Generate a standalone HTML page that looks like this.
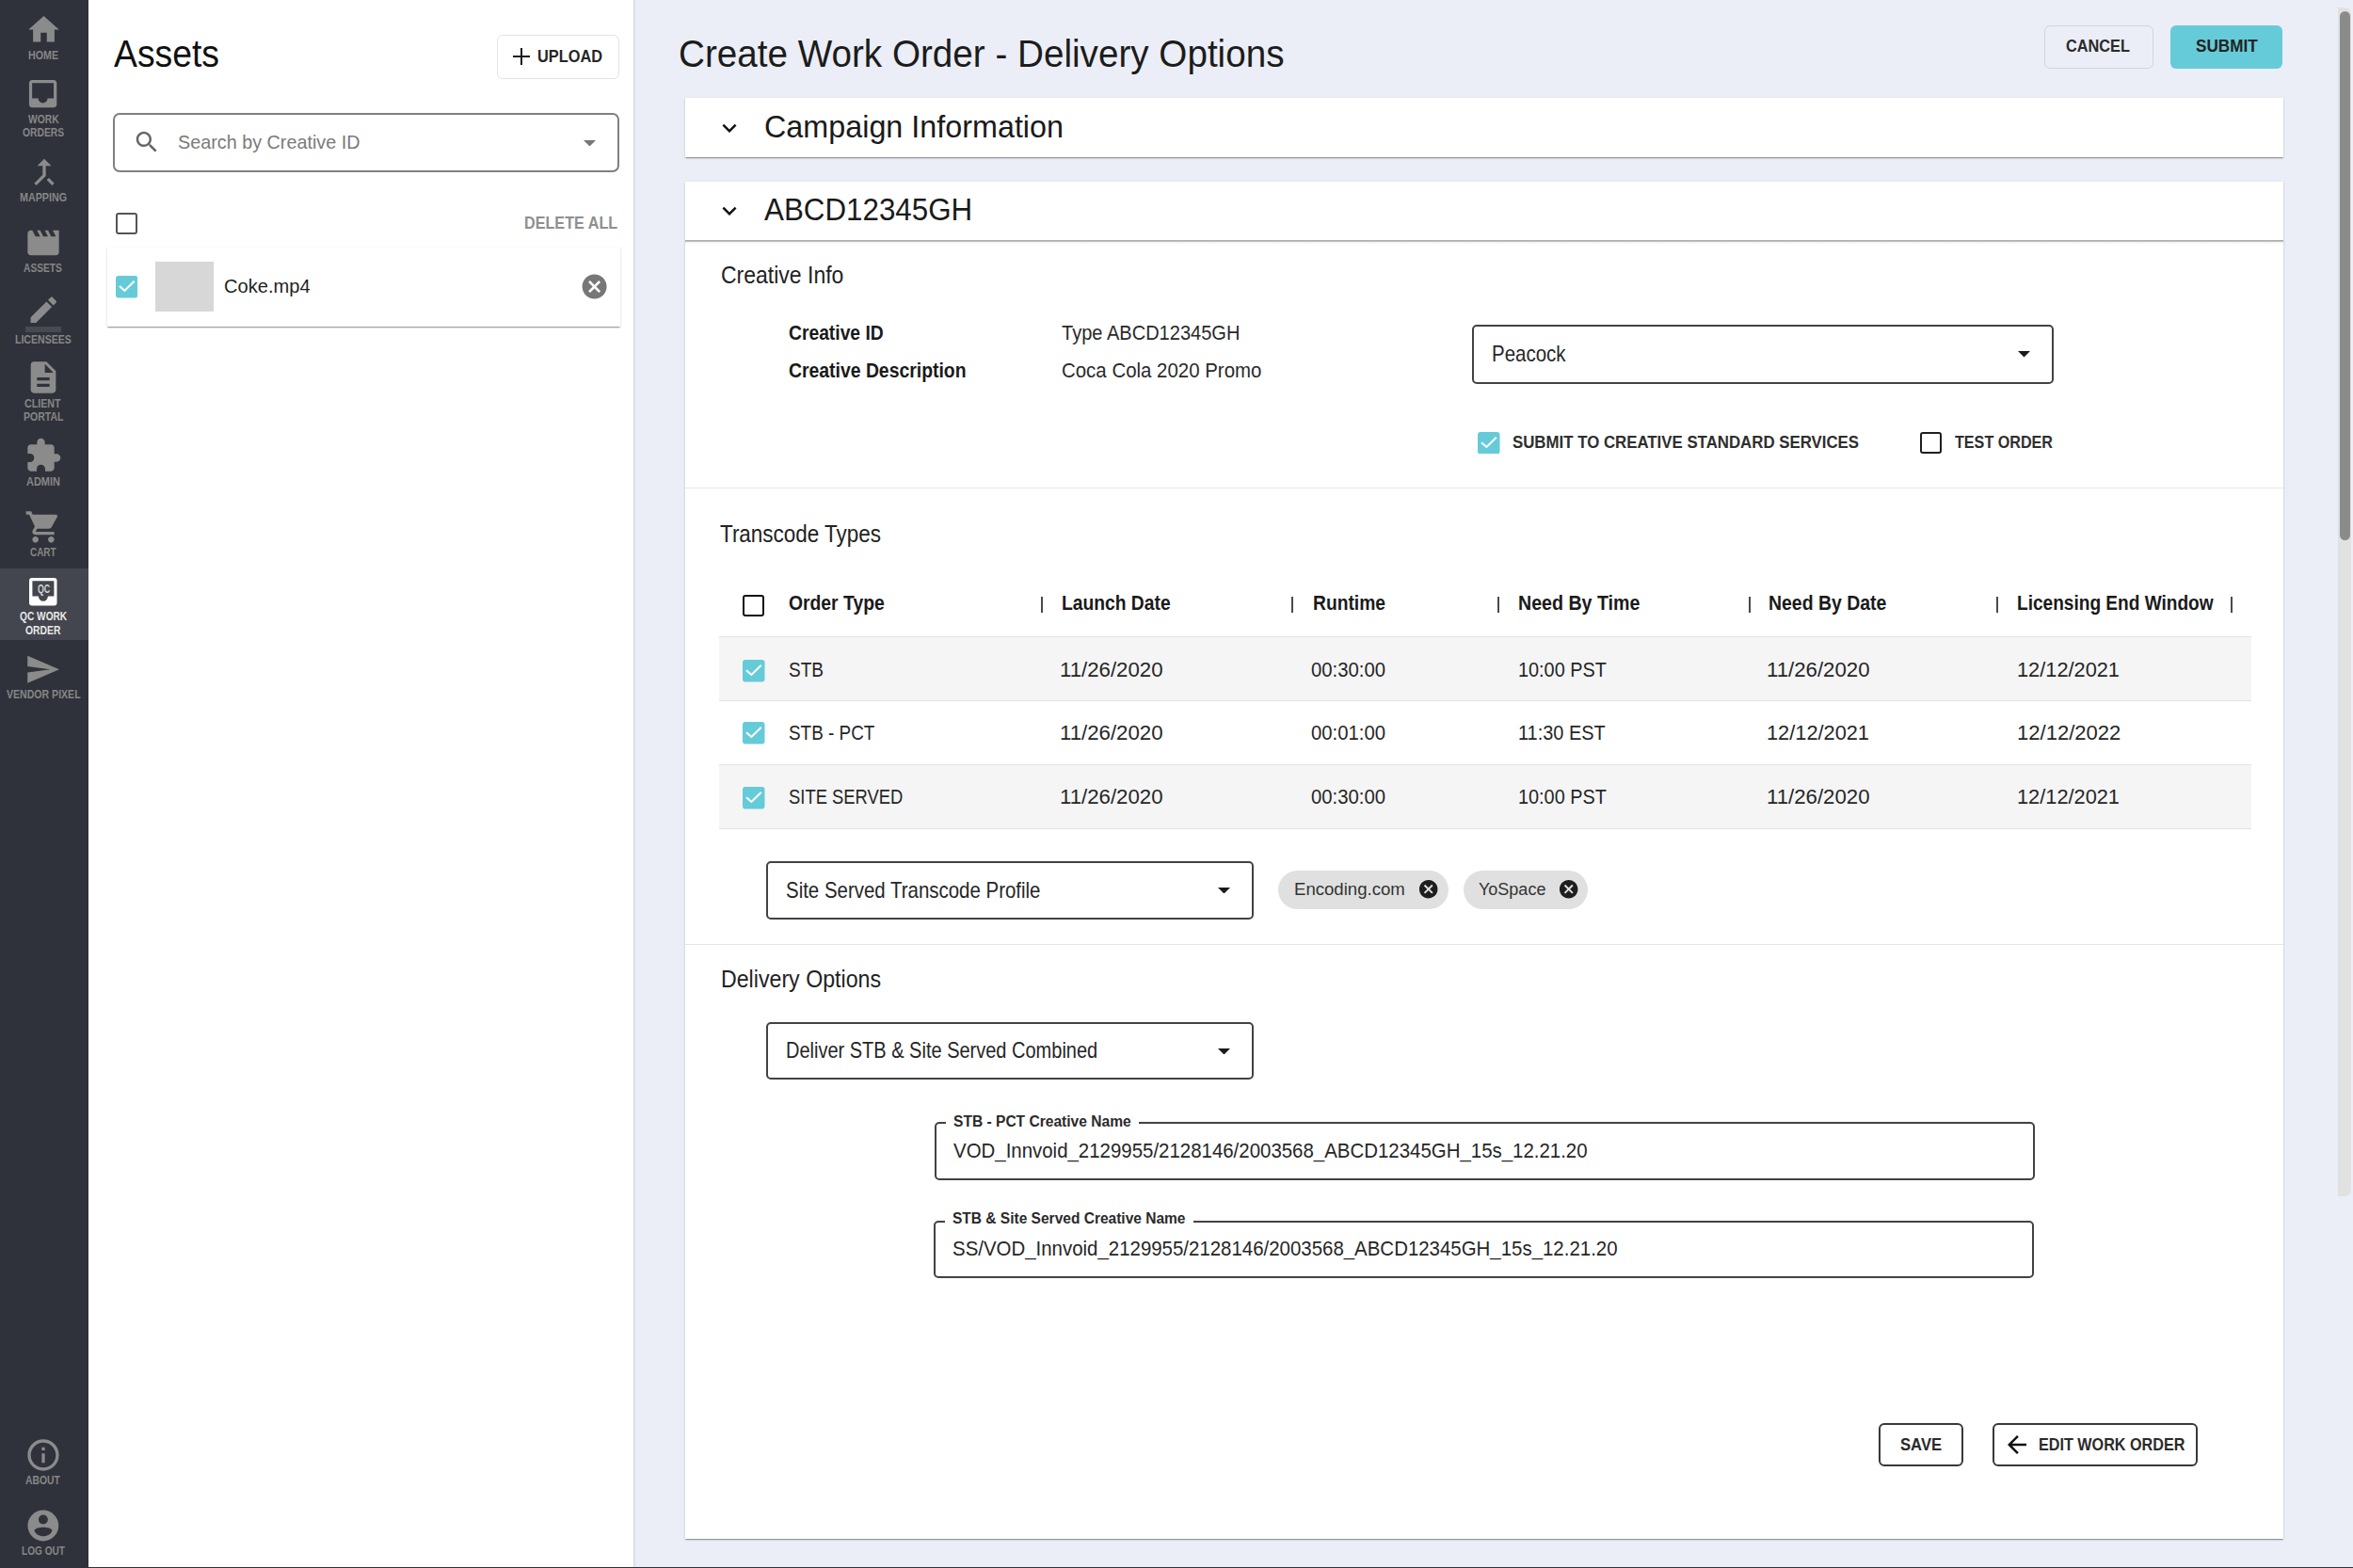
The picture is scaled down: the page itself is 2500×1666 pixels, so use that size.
<!DOCTYPE html>
<html><head><meta charset="utf-8"><style>
*{box-sizing:border-box;margin:0;padding:0}
html,body{width:2500px;height:1666px;overflow:hidden;background:#ebeef6;font-family:"Liberation Sans",sans-serif}
.t{position:absolute;line-height:1;white-space:nowrap;transform-origin:0 0}
svg{position:absolute;display:block}
</style></head><body>
<div style="position:absolute;left:0px;top:0px;width:94px;height:1666px;background:#2f323a"></div>
<div style="position:absolute;left:0px;top:604px;width:94px;height:76px;background:#43464e"></div>
<svg style="left:26.75px;top:12.1px" width="39" height="39" viewBox="0 0 24 24"><path fill="#8b8b8b" d="M10 20v-6h4v6h5v-8h3L12 3 2 12h3v8z"/></svg>
<svg style="left:26.1px;top:79.7px" width="39.2" height="39.2" viewBox="0 0 24 24"><path fill="#8b8b8b" d="M19 3H4.99c-1.11 0-1.98.89-1.98 2L3 19c0 1.1.88 2 1.99 2H19c1.1 0 2-.9 2-2V5c0-1.11-.9-2-2-2zm0 12h-4c0 1.66-1.35 3-3 3s-3-1.34-3-3H4.99V5H19v10z"/></svg>
<svg style="left:26.5px;top:163.2px" width="40" height="40" viewBox="0 0 24 24"><path fill="#8b8b8b" d="M17 20.41L18.41 19 15 15.59 13.59 17 17 20.41zM7.5 8H11v5.59L5.59 19 7 20.41l6-6V8h3.5L12 3.5 7.5 8z"/></svg>
<svg style="left:25.9px;top:238.3px" width="40" height="40" viewBox="0 0 24 24"><path fill="#8b8b8b" d="M18 4l2 4h-3l-2-4h-2l2 4h-3l-2-4H8l2 4H7L5 4H4c-1.1 0-1.99.9-1.99 2L2 18c0 1.1.9 2 2 2h16c1.1 0 2-.9 2-2V4h-4z"/></svg>
<svg style="left:28.4px;top:311.2px" width="36.5" height="36.5" viewBox="0 0 24 24"><path fill="#8b8b8b" d="M3 17.25V21h3.75L17.81 9.94l-3.75-3.75L3 17.25zM20.71 7.04c.39-.39.39-1.02 0-1.41l-2.34-2.34c-.39-.39-1.02-.39-1.41 0l-1.83 1.83 3.75 3.75 1.83-1.83z"/></svg>
<div style="position:absolute;left:27.4px;top:347px;width:37.4px;height:5.699999999999989px;background:#464a52"></div>
<svg style="left:26px;top:381.4px" width="40" height="40" viewBox="0 0 24 24"><path fill="#8b8b8b" d="M14 2H6c-1.1 0-1.99.9-1.99 2L4 20c0 1.1.89 2 1.99 2H18c1.1 0 2-.9 2-2V8l-6-6zm2 16H8v-2h8v2zm0-4H8v-2h8v2zm-3-5V3.5L18.5 9H13z"/></svg>
<svg style="left:26px;top:464.3px" width="40" height="40" viewBox="0 0 24 24"><path fill="#8b8b8b" d="M20.5 11H19V7c0-1.1-.9-2-2-2h-4V3.5C13 2.12 11.88 1 10.5 1S8 2.12 8 3.5V5H4c-1.1 0-1.99.9-1.99 2v3.8H3.5c1.49 0 2.7 1.21 2.7 2.7s-1.21 2.7-2.7 2.7H2V20c0 1.1.9 2 2 2h3.8v-1.5c0-1.49 1.21-2.7 2.7-2.7 1.49 0 2.7 1.21 2.7 2.7V22H17c1.1 0 2-.9 2-2v-4h1.5c1.38 0 2.5-1.12 2.5-2.5S21.88 11 20.5 11z"/></svg>
<svg style="left:26px;top:540px" width="40" height="40" viewBox="0 0 24 24"><path fill="#8b8b8b" d="M7 18c-1.1 0-1.99.9-1.99 2S5.9 22 7 22s2-.9 2-2-.9-2-2-2zM1 2v2h2l3.6 7.59-1.35 2.45c-.16.28-.25.61-.25.96 0 1.1.9 2 2 2h12v-2H7.42c-.14 0-.25-.11-.25-.25l.03-.12.9-1.63h7.45c.75 0 1.41-.41 1.75-1.03l3.58-6.49c.08-.14.12-.31.12-.48 0-.55-.45-1-1-1H5.21l-.94-2H1zm16 16c-1.1 0-1.99.9-1.99 2s.89 2 1.99 2 2-.9 2-2-.9-2-2-2z"/></svg>
<svg style="left:31px;top:614.4px" width="29.5" height="29.5" viewBox="0 0 29.5 29.5"><path fill="#fff" fill-rule="evenodd" d="M3 0H26.5A3 3 0 0 1 29.5 3V26.5A3 3 0 0 1 26.5 29.5H3A3 3 0 0 1 0 26.5V3A3 3 0 0 1 3 0ZM3.4 3.2V19.4H9.8C10.3 23 12.3 24.7 14.9 24.7S19.5 23 20 19.4H26.4V3.2Z"/></svg>
<svg style="left:25.8px;top:692px" width="38.6" height="38.6" viewBox="0 0 24 24"><path fill="#8b8b8b" d="M2.01 21L23 12 2.01 3 2 10l15 2-15 2z"/></svg>
<svg style="left:26.3px;top:1525.7px" width="40" height="40" viewBox="0 0 24 24"><path fill="#8b8b8b" d="M11 17h2v-6h-2v6zm1-15C6.48 2 2 6.48 2 12s4.48 10 10 10 10-4.48 10-10S17.52 2 12 2zm0 18c-4.41 0-8-3.59-8-8s3.59-8 8-8 8 3.59 8 8-3.59 8-8 8zM11 9h2V7h-2v2z"/></svg>
<svg style="left:29px;top:1604px" width="34" height="34" viewBox="29 1604 34 34"><circle cx="45.85" cy="1621" r="16.4" fill="#8b8b8b"/><circle cx="45.9" cy="1614.5" r="4.95" fill="#2f323a"/><path fill="#2f323a" d="M36.5 1626C38 1621.5 54 1621.5 55.4 1626C53.5 1634.3 38.5 1634.3 36.5 1626Z"/></svg>
<div style="position:absolute;left:94px;top:0px;width:579px;height:1666px;background:#fff;box-shadow:1px 0 2px rgba(0,0,0,.12)"></div>
<div style="position:absolute;left:528px;top:37px;width:130px;height:46.5px;border:1.5px solid #e3e3e3;border-radius:6px"></div>
<div style="position:absolute;left:544.5px;top:59.2px;width:18.299999999999955px;height:2.0px;background:#1a1a1a"></div>
<div style="position:absolute;left:552.6px;top:51px;width:2.0px;height:18.400000000000006px;background:#1a1a1a"></div>
<div style="position:absolute;left:120px;top:120px;width:538px;height:62.5px;border:2px solid #808080;border-radius:7px"></div>
<svg style="left:141px;top:136.3px" width="30" height="30" viewBox="0 0 24 24"><path fill="#666" d="M15.5 14h-.79l-.28-.27C15.41 12.59 16 11.11 16 9.5 16 5.91 13.09 3 9.5 3S3 5.91 3 9.5 5.91 16 9.5 16c1.61 0 3.09-.59 4.23-1.57l.27.28v.79l5 4.99L20.49 19l-4.99-5zm-6 0C7.01 14 5 11.99 5 9.5S7.01 5 9.5 5 14 7.01 14 9.5 11.99 14 9.5 14z"/></svg>
<svg style="left:620px;top:148.8px" width="13" height="6.5" viewBox="0 0 13 6.5"><path fill="#777" d="M0 0h13L6.5 6.5z"/></svg>
<div style="position:absolute;left:123px;top:226px;width:22.599999999999994px;height:22.599999999999994px;border:2.6px solid #555;border-radius:3px"></div>
<div style="position:absolute;left:113.5px;top:263px;width:545.0px;height:84px;background:#fff;box-shadow:0 2px 1px -1px rgba(0,0,0,.2),0 1px 1px 0 rgba(0,0,0,.14),0 1px 3px 0 rgba(0,0,0,.12)"></div>
<svg style="left:122.8px;top:293.2px" width="23.4" height="23.4" viewBox="0 0 24 24"><rect x="0" y="0" width="24" height="24" rx="3" fill="#66cbd8"/><path d="M4.1 11.4l5.5 4.9L20.2 5.9" fill="none" stroke="#fff" stroke-width="2.1"/></svg>
<div style="position:absolute;left:164.5px;top:278px;width:62.5px;height:53px;background:#d7d7d7"></div>
<svg style="left:616.1999999999999px;top:289.2px" width="31.2" height="31.2" viewBox="0 0 24 24"><circle cx="12" cy="12" r="7" fill="#fff"/><path fill="#777" d="M12 2C6.47 2 2 6.47 2 12s4.47 10 10 10 10-4.47 10-10S17.53 2 12 2zm5 13.59L15.59 17 12 13.41 8.41 17 7 15.59 10.59 12 7 8.41 8.41 7 12 10.59 15.59 7 17 8.41 13.41 12 17 15.59z"/></svg>
<div style="position:absolute;left:0px;top:1665px;width:2500px;height:1px;background:#2f323a"></div>
<div style="position:absolute;left:2172px;top:27px;width:116px;height:46px;border:1.5px solid #d2d4d9;border-radius:6px"></div>
<div style="position:absolute;left:2306px;top:26.5px;width:119px;height:46.7px;background:#66cbd8;border-radius:6px"></div>
<div style="position:absolute;left:728px;top:104px;width:1697.5px;height:63px;background:#fff;box-shadow:0 2px 1px -1px rgba(0,0,0,.2),0 1px 1px 0 rgba(0,0,0,.14),0 1px 3px 0 rgba(0,0,0,.12)"></div>
<div style="position:absolute;left:728px;top:193px;width:1697.5px;height:1442px;background:#fff;box-shadow:0 2px 1px -1px rgba(0,0,0,.2),0 1px 1px 0 rgba(0,0,0,.14),0 1px 3px 0 rgba(0,0,0,.12)"></div>
<svg style="left:760px;top:120.5px" width="30" height="30" viewBox="0 0 24 24"><path fill="#111" d="M16.59 8.59L12 13.17 7.41 8.59 6 10l6 6 6-6z"/></svg>
<svg style="left:760px;top:209px" width="30" height="30" viewBox="0 0 24 24"><path fill="#111" d="M16.59 8.59L12 13.17 7.41 8.59 6 10l6 6 6-6z"/></svg>
<div style="position:absolute;left:728px;top:255px;width:1697.5px;height:2px;background:linear-gradient(#a8a8a8,#c8c8c8)"></div>
<div style="position:absolute;left:728px;top:257px;width:1697.5px;height:2px;background:linear-gradient(#ececec,#fff)"></div>
<div style="position:absolute;left:1564px;top:345px;width:618px;height:62.5px;border:2px solid #424242;border-radius:5px"></div>
<svg style="left:2144px;top:373.45px" width="13" height="6.5" viewBox="0 0 13 6.5"><path fill="#1a1a1a" d="M0 0h13L6.5 6.5z"/></svg>
<svg style="left:1570px;top:458.5px" width="23.5" height="23.5" viewBox="0 0 24 24"><rect x="0" y="0" width="24" height="24" rx="3" fill="#66cbd8"/><path d="M4.1 11.4l5.5 4.9L20.2 5.9" fill="none" stroke="#fff" stroke-width="2.1"/></svg>
<div style="position:absolute;left:2040px;top:458.5px;width:23px;height:23.0px;border:2.5px solid #1f1f1f;border-radius:3px"></div>
<div style="position:absolute;left:728px;top:517.5px;width:1697.5px;height:1.5px;background:#e6e6e6"></div>
<div style="position:absolute;left:789px;top:632px;width:22.799999999999955px;height:22.799999999999955px;border:2.5px solid #111;border-radius:3px"></div>
<div style="position:absolute;left:1106px;top:634px;width:2px;height:17px;background:#4a4a4a"></div>
<div style="position:absolute;left:1372px;top:634px;width:2px;height:17px;background:#4a4a4a"></div>
<div style="position:absolute;left:1591px;top:634px;width:2px;height:17px;background:#4a4a4a"></div>
<div style="position:absolute;left:1858px;top:634px;width:2px;height:17px;background:#4a4a4a"></div>
<div style="position:absolute;left:2121px;top:634px;width:2px;height:17px;background:#4a4a4a"></div>
<div style="position:absolute;left:2370px;top:634px;width:2px;height:17px;background:#4a4a4a"></div>
<div style="position:absolute;left:764px;top:676px;width:1627.5px;height:68px;background:#f5f5f5"></div>
<div style="position:absolute;left:764px;top:812px;width:1627.5px;height:68px;background:#f5f5f5"></div>
<div style="position:absolute;left:764px;top:675.5px;width:1627.5px;height:1.2999999999999545px;background:#e2e2e2"></div>
<div style="position:absolute;left:764px;top:743.5px;width:1627.5px;height:1.2999999999999545px;background:#e2e2e2"></div>
<div style="position:absolute;left:764px;top:811.5px;width:1627.5px;height:1.2999999999999545px;background:#e2e2e2"></div>
<div style="position:absolute;left:764px;top:879.5px;width:1627.5px;height:1.2999999999999545px;background:#e2e2e2"></div>
<svg style="left:789px;top:701px" width="23.5" height="23.5" viewBox="0 0 24 24"><rect x="0" y="0" width="24" height="24" rx="3" fill="#66cbd8"/><path d="M4.1 11.4l5.5 4.9L20.2 5.9" fill="none" stroke="#fff" stroke-width="2.1"/></svg>
<svg style="left:789px;top:767px" width="23.5" height="23.5" viewBox="0 0 24 24"><rect x="0" y="0" width="24" height="24" rx="3" fill="#66cbd8"/><path d="M4.1 11.4l5.5 4.9L20.2 5.9" fill="none" stroke="#fff" stroke-width="2.1"/></svg>
<svg style="left:789px;top:836px" width="23.5" height="23.5" viewBox="0 0 24 24"><rect x="0" y="0" width="24" height="24" rx="3" fill="#66cbd8"/><path d="M4.1 11.4l5.5 4.9L20.2 5.9" fill="none" stroke="#fff" stroke-width="2.1"/></svg>
<div style="position:absolute;left:814px;top:915px;width:518px;height:61.5px;border:2px solid #424242;border-radius:5px"></div>
<svg style="left:1294px;top:942.95px" width="13" height="6.5" viewBox="0 0 13 6.5"><path fill="#1a1a1a" d="M0 0h13L6.5 6.5z"/></svg>
<div style="position:absolute;left:1358.2px;top:924.7px;width:180.70000000000005px;height:41.299999999999955px;background:#e0e0e0;border-radius:21px"></div>
<svg style="left:1506.4px;top:933.1999999999999px" width="23.4" height="23.4" viewBox="0 0 24 24"><circle cx="12" cy="12" r="7" fill="#e0e0e0"/><path fill="#1e1e1e" d="M12 2C6.47 2 2 6.47 2 12s4.47 10 10 10 10-4.47 10-10S17.53 2 12 2zm5 13.59L15.59 17 12 13.41 8.41 17 7 15.59 10.59 12 7 8.41 8.41 7 12 10.59 15.59 7 17 8.41 13.41 12 17 15.59z"/></svg>
<div style="position:absolute;left:1555px;top:924.7px;width:132px;height:41.299999999999955px;background:#e0e0e0;border-radius:21px"></div>
<svg style="left:1654.5px;top:933.1999999999999px" width="23.4" height="23.4" viewBox="0 0 24 24"><circle cx="12" cy="12" r="7" fill="#e0e0e0"/><path fill="#1e1e1e" d="M12 2C6.47 2 2 6.47 2 12s4.47 10 10 10 10-4.47 10-10S17.53 2 12 2zm5 13.59L15.59 17 12 13.41 8.41 17 7 15.59 10.59 12 7 8.41 8.41 7 12 10.59 15.59 7 17 8.41 13.41 12 17 15.59z"/></svg>
<div style="position:absolute;left:728px;top:1002.5px;width:1697.5px;height:1.5px;background:#e6e6e6"></div>
<div style="position:absolute;left:814px;top:1086px;width:518px;height:61px;border:2px solid #424242;border-radius:5px"></div>
<svg style="left:1294px;top:1113.7px" width="13" height="6.5" viewBox="0 0 13 6.5"><path fill="#1a1a1a" d="M0 0h13L6.5 6.5z"/></svg>
<div style="position:absolute;left:993px;top:1192px;width:1169px;height:61.5px;border:2px solid #424242;border-radius:5px"></div>
<div style="position:absolute;left:1005px;top:1189px;width:204.70000000000005px;height:7px;background:#fff"></div>
<div style="position:absolute;left:992px;top:1296.5px;width:1169px;height:61.0px;border:2px solid #424242;border-radius:5px"></div>
<div style="position:absolute;left:1004px;top:1293.5px;width:263.5px;height:7.0px;background:#fff"></div>
<div style="position:absolute;left:1996px;top:1512px;width:89.5px;height:46px;border:2px solid #383838;border-radius:6px"></div>
<div style="position:absolute;left:2117px;top:1512px;width:218px;height:46px;border:2px solid #383838;border-radius:6px"></div>
<svg style="left:2128px;top:1520px" width="30" height="30" viewBox="0 0 24 24"><path fill="#111" d="M20 11H7.83l5.59-5.59L12 4l-8 8 8 8 1.41-1.41L7.83 13H20v-2z"/></svg>
<div style="position:absolute;left:2484px;top:8px;width:14px;height:1263px;background:#e1e1e1;border-radius:0 7px 7px 0"></div>
<div style="position:absolute;left:2485.5px;top:12px;width:11.5px;height:562px;background:#8b8b8b;border-radius:6px"></div>
<div id="t0" class="t" style="left:29.8px;top:52.0px;font-size:13.04px;font-weight:700;color:#868686;transform:scaleX(0.8237);">HOME</div>
<div id="t1" class="t" style="left:29.5px;top:119.5px;font-size:13.04px;font-weight:700;color:#868686;transform:scaleX(0.7924);">WORK</div>
<div id="t2" class="t" style="left:23.7px;top:134.0px;font-size:13.04px;font-weight:700;color:#868686;transform:scaleX(0.7926);">ORDERS</div>
<div id="t3" class="t" style="left:20.8px;top:202.8px;font-size:13.04px;font-weight:700;color:#868686;transform:scaleX(0.8220);">MAPPING</div>
<div id="t4" class="t" style="left:25.0px;top:278.3px;font-size:13.04px;font-weight:700;color:#868686;transform:scaleX(0.7844);">ASSETS</div>
<div id="t5" class="t" style="left:16.0px;top:353.6px;font-size:13.04px;font-weight:700;color:#868686;transform:scaleX(0.8095);">LICENSEES</div>
<div id="t6" class="t" style="left:26.4px;top:421.8px;font-size:13.04px;font-weight:700;color:#868686;transform:scaleX(0.8202);">CLIENT</div>
<div id="t7" class="t" style="left:24.5px;top:436.0px;font-size:13.04px;font-weight:700;color:#868686;transform:scaleX(0.8078);">PORTAL</div>
<div id="t8" class="t" style="left:27.6px;top:505.0px;font-size:13.04px;font-weight:700;color:#868686;transform:scaleX(0.8404);">ADMIN</div>
<div id="t9" class="t" style="left:31.8px;top:580.0px;font-size:13.04px;font-weight:700;color:#868686;transform:scaleX(0.7624);">CART</div>
<div id="t10" class="t" style="left:20.8px;top:648.0px;font-size:13.04px;font-weight:700;color:#e8e8e8;transform:scaleX(0.7790);">QC WORK</div>
<div id="t11" class="t" style="left:27.1px;top:662.5px;font-size:13.04px;font-weight:700;color:#e8e8e8;transform:scaleX(0.7947);">ORDER</div>
<div id="t12" class="t" style="left:6.5px;top:731.3px;font-size:13.04px;font-weight:700;color:#868686;transform:scaleX(0.8100);">VENDOR PIXEL</div>
<div id="t13" class="t" style="left:27.2px;top:1566.0px;font-size:13.04px;font-weight:700;color:#868686;transform:scaleX(0.7941);">ABOUT</div>
<div id="t14" class="t" style="left:23.0px;top:1641.2px;font-size:13.04px;font-weight:700;color:#868686;transform:scaleX(0.7731);">LOG OUT</div>
<div id="t15" class="t" style="left:39.8px;top:619.4px;font-size:13.33px;font-weight:700;color:#d4d4d4;transform:scaleX(0.6600);">QC</div>
<div id="t16" class="t" style="left:121.0px;top:37.1px;font-size:40.58px;font-weight:400;color:#111;transform:scaleX(0.9197);">Assets</div>
<div id="t17" class="t" style="left:570.6px;top:51.1px;font-size:18.26px;font-weight:700;color:#262626;transform:scaleX(0.8967);">UPLOAD</div>
<div id="t18" class="t" style="left:188.7px;top:141.2px;font-size:20.87px;font-weight:400;color:#7a7a7a;transform:scaleX(0.9483);">Search by Creative ID</div>
<div id="t19" class="t" style="left:557.0px;top:228.2px;font-size:18.41px;font-weight:700;color:#8f8f8f;transform:scaleX(0.8792);">DELETE ALL</div>
<div id="t20" class="t" style="left:238.3px;top:293.8px;font-size:20.72px;font-weight:400;color:#1f1f1f;transform:scaleX(0.9710);">Coke.mp4</div>
<div id="t21" class="t" style="left:721.0px;top:37.1px;font-size:40.58px;font-weight:400;color:#1c1c1c;transform:scaleX(0.9523);">Create Work Order - Delivery Options</div>
<div id="t22" class="t" style="left:2194.6px;top:39.5px;font-size:18.84px;font-weight:700;color:#2a2a2a;transform:scaleX(0.8655);">CANCEL</div>
<div id="t23" class="t" style="left:2333.0px;top:39.5px;font-size:18.84px;font-weight:700;color:#222;transform:scaleX(0.9089);">SUBMIT</div>
<div id="t24" class="t" style="left:812.4px;top:117.7px;font-size:33.91px;font-weight:400;color:#1a1a1a;transform:scaleX(0.9533);">Campaign Information</div>
<div id="t25" class="t" style="left:812.4px;top:206.0px;font-size:33.91px;font-weight:400;color:#1a1a1a;transform:scaleX(0.9241);">ABCD12345GH</div>
<div id="t26" class="t" style="left:766.0px;top:278.6px;font-size:26.09px;font-weight:400;color:#222;transform:scaleX(0.8819);">Creative Info</div>
<div id="t27" class="t" style="left:838.0px;top:342.5px;font-size:22.61px;font-weight:700;color:#1a1a1a;transform:scaleX(0.8524);">Creative ID</div>
<div id="t28" class="t" style="left:1128.0px;top:342.5px;font-size:22.61px;font-weight:400;color:#2a2a2a;transform:scaleX(0.8865);">Type ABCD12345GH</div>
<div id="t29" class="t" style="left:838.0px;top:382.6px;font-size:22.61px;font-weight:700;color:#1a1a1a;transform:scaleX(0.8572);">Creative Description</div>
<div id="t30" class="t" style="left:1128.0px;top:382.6px;font-size:22.61px;font-weight:400;color:#2a2a2a;transform:scaleX(0.9038);">Coca Cola 2020 Promo</div>
<div id="t31" class="t" style="left:1585.0px;top:365.4px;font-size:23.19px;font-weight:400;color:#262626;transform:scaleX(0.8826);">Peacock</div>
<div id="t32" class="t" style="left:1607.0px;top:461.4px;font-size:18.84px;font-weight:700;color:#2e2e2e;transform:scaleX(0.8936);">SUBMIT TO CREATIVE STANDARD SERVICES</div>
<div id="t33" class="t" style="left:2077.0px;top:461.4px;font-size:18.84px;font-weight:700;color:#2e2e2e;transform:scaleX(0.8570);">TEST ORDER</div>
<div id="t34" class="t" style="left:765.0px;top:554.6px;font-size:25.36px;font-weight:400;color:#222;transform:scaleX(0.8854);">Transcode Types</div>
<div id="t35" class="t" style="left:837.6px;top:629.9px;font-size:22.61px;font-weight:700;color:#1a1a1a;transform:scaleX(0.8550);">Order Type</div>
<div id="t36" class="t" style="left:1128.0px;top:629.9px;font-size:22.61px;font-weight:700;color:#1a1a1a;transform:scaleX(0.8520);">Launch Date</div>
<div id="t37" class="t" style="left:1395.0px;top:629.9px;font-size:22.61px;font-weight:700;color:#1a1a1a;transform:scaleX(0.8513);">Runtime</div>
<div id="t38" class="t" style="left:1613.4px;top:629.9px;font-size:22.61px;font-weight:700;color:#1a1a1a;transform:scaleX(0.8677);">Need By Time</div>
<div id="t39" class="t" style="left:1879.0px;top:629.9px;font-size:22.61px;font-weight:700;color:#1a1a1a;transform:scaleX(0.8603);">Need By Date</div>
<div id="t40" class="t" style="left:2143.0px;top:629.9px;font-size:22.61px;font-weight:700;color:#1a1a1a;transform:scaleX(0.8437);">Licensing End Window</div>
<div id="t41" class="t" style="left:837.6px;top:700.9px;font-size:22.61px;font-weight:400;color:#262626;transform:scaleX(0.8435);">STB</div>
<div id="t42" class="t" style="left:1126.0px;top:700.9px;font-size:22.61px;font-weight:400;color:#262626;transform:scaleX(0.9822);">11/26/2020</div>
<div id="t43" class="t" style="left:1392.5px;top:700.9px;font-size:22.61px;font-weight:400;color:#262626;transform:scaleX(0.8976);">00:30:00</div>
<div id="t44" class="t" style="left:1613.0px;top:700.9px;font-size:22.61px;font-weight:400;color:#262626;transform:scaleX(0.8779);">10:00 PST</div>
<div id="t45" class="t" style="left:1876.5px;top:700.9px;font-size:22.61px;font-weight:400;color:#262626;transform:scaleX(0.9822);">11/26/2020</div>
<div id="t46" class="t" style="left:2143.0px;top:700.9px;font-size:22.61px;font-weight:400;color:#262626;transform:scaleX(0.9631);">12/12/2021</div>
<div id="t47" class="t" style="left:837.6px;top:767.9px;font-size:22.61px;font-weight:400;color:#262626;transform:scaleX(0.8363);">STB - PCT</div>
<div id="t48" class="t" style="left:1126.0px;top:767.9px;font-size:22.61px;font-weight:400;color:#262626;transform:scaleX(0.9822);">11/26/2020</div>
<div id="t49" class="t" style="left:1392.5px;top:767.9px;font-size:22.61px;font-weight:400;color:#262626;transform:scaleX(0.8976);">00:01:00</div>
<div id="t50" class="t" style="left:1613.0px;top:767.9px;font-size:22.61px;font-weight:400;color:#262626;transform:scaleX(0.8815);">11:30 EST</div>
<div id="t51" class="t" style="left:1876.5px;top:767.9px;font-size:22.61px;font-weight:400;color:#262626;transform:scaleX(0.9631);">12/12/2021</div>
<div id="t52" class="t" style="left:2143.0px;top:767.9px;font-size:22.61px;font-weight:400;color:#262626;transform:scaleX(0.9746);">12/12/2022</div>
<div id="t53" class="t" style="left:837.6px;top:835.9px;font-size:22.61px;font-weight:400;color:#262626;transform:scaleX(0.8142);">SITE SERVED</div>
<div id="t54" class="t" style="left:1126.0px;top:835.9px;font-size:22.61px;font-weight:400;color:#262626;transform:scaleX(0.9822);">11/26/2020</div>
<div id="t55" class="t" style="left:1392.5px;top:835.9px;font-size:22.61px;font-weight:400;color:#262626;transform:scaleX(0.8976);">00:30:00</div>
<div id="t56" class="t" style="left:1613.0px;top:835.9px;font-size:22.61px;font-weight:400;color:#262626;transform:scaleX(0.8779);">10:00 PST</div>
<div id="t57" class="t" style="left:1876.5px;top:835.9px;font-size:22.61px;font-weight:400;color:#262626;transform:scaleX(0.9822);">11/26/2020</div>
<div id="t58" class="t" style="left:2143.0px;top:835.9px;font-size:22.61px;font-weight:400;color:#262626;transform:scaleX(0.9631);">12/12/2021</div>
<div id="t59" class="t" style="left:835.0px;top:934.8px;font-size:23.19px;font-weight:400;color:#262626;transform:scaleX(0.8818);">Site Served Transcode Profile</div>
<div id="t60" class="t" style="left:1374.5px;top:936.4px;font-size:18.70px;font-weight:400;color:#333;transform:scaleX(0.9947);">Encoding.com</div>
<div id="t61" class="t" style="left:1570.9px;top:936.4px;font-size:18.70px;font-weight:400;color:#333;transform:scaleX(0.9630);">YoSpace</div>
<div id="t62" class="t" style="left:765.5px;top:1027.0px;font-size:26.09px;font-weight:400;color:#222;transform:scaleX(0.8886);">Delivery Options</div>
<div id="t63" class="t" style="left:835.0px;top:1105.2px;font-size:23.19px;font-weight:400;color:#262626;transform:scaleX(0.8624);">Deliver STB &amp; Site Served Combined</div>
<div id="t64" class="t" style="left:1013.0px;top:1183.5px;font-size:15.94px;font-weight:700;color:#2a2a2a;transform:scaleX(0.9772);">STB - PCT Creative Name</div>
<div id="t65" class="t" style="left:1013.0px;top:1211.9px;font-size:22.61px;font-weight:400;color:#262626;transform:scaleX(0.9036);">VOD_Innvoid_2129955/2128146/2003568_ABCD12345GH_15s_12.21.20</div>
<div id="t66" class="t" style="left:1012.0px;top:1287.4px;font-size:15.94px;font-weight:700;color:#2a2a2a;transform:scaleX(0.9735);">STB &amp; Site Served Creative Name</div>
<div id="t67" class="t" style="left:1012.0px;top:1315.9px;font-size:22.61px;font-weight:400;color:#262626;transform:scaleX(0.9036);">SS/VOD_Innvoid_2129955/2128146/2003568_ABCD12345GH_15s_12.21.20</div>
<div id="t68" class="t" style="left:2018.5px;top:1525.7px;font-size:18.12px;font-weight:700;color:#2a2a2a;transform:scaleX(0.9190);">SAVE</div>
<div id="t69" class="t" style="left:2165.6px;top:1525.7px;font-size:18.12px;font-weight:700;color:#2a2a2a;transform:scaleX(0.8929);">EDIT WORK ORDER</div>
</body></html>
